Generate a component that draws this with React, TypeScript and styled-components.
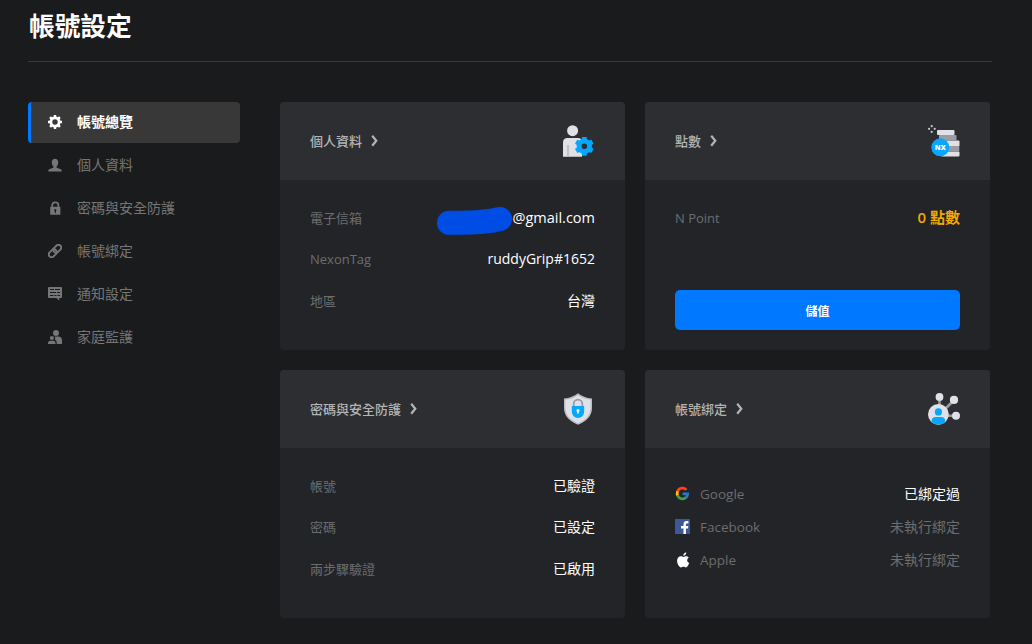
import React from "react";
import styled, { createGlobalStyle } from "styled-components";

const GlobalStyle = createGlobalStyle`
  * { box-sizing: border-box; }
  body {
    margin: 0;
    background: #1a1b1c;
    color: #fff;
    font-family: "Open Sans", "Noto Sans CJK TC", sans-serif;
    overflow: hidden;
  }
`;

const Page = styled.div`
  width: 1032px;
  height: 644px;
  padding: 0 40px 0 28px;
  overflow: hidden;
`;

const Header = styled.header`
  height: 62px;
  display: flex;
  align-items: flex-start;
  border-bottom: 1px solid #39393a;
`;

const Title = styled.h1`
  margin: 5px 0 0 1px;
  font-family: "Noto Sans CJK TC", sans-serif;
  font-size: 25.7px;
  line-height: 40px;
  font-weight: 700;
`;

const Columns = styled.div`
  display: flex;
  gap: 40px;
  padding-top: 40px;
`;

const Sidebar = styled.nav`
  width: 212px;
  display: flex;
  flex-direction: column;
  gap: 2px;
`;

const NavItem = styled.a<{ $active?: boolean }>`
  height: 41px;
  display: flex;
  align-items: center;
  gap: 15px;
  padding-left: 17px;
  border-left: 3px solid ${(p) => (p.$active ? "#0078ff" : "transparent")};
  border-radius: 4px;
  background: ${(p) => (p.$active ? "#383838" : "transparent")};
  color: ${(p) => (p.$active ? "#fff" : "#757676")};
  font-family: "Noto Sans CJK TC", sans-serif;
  font-size: 14px;
  line-height: 20px;
  font-weight: ${(p) => (p.$active ? 700 : 400)};
  svg { display: block; flex: none; margin-bottom: 1px; }
`;

const NavText = styled.span`
  padding-bottom: 4px;
`;

const Cards = styled.main`
  display: grid;
  grid-template-columns: 345px 345px;
  grid-auto-rows: 248px;
  gap: 20px;
`;

const Card = styled.section`
  background: #232428;
  border-radius: 4px;
  overflow: hidden;
`;

const CardHead = styled.div`
  height: 78px;
  padding: 0 30px;
  display: flex;
  align-items: center;
  justify-content: space-between;
  background: #2d2e32;
  > svg { display: block; }
`;

const CardTitle = styled.h2`
  margin: 0;
  display: flex;
  align-items: center;
  gap: 9px;
  color: #b3b4b5;
  font-family: "Noto Sans CJK TC", sans-serif;
  font-size: 13px;
  line-height: 18px;
  font-weight: 500;
`;

const CardBody = styled.div<{ $top?: number }>`
  padding: ${(p) => p.$top ?? 17}px 30px 0;
`;

const Row = styled.div<{ $height?: number }>`
  height: ${(p) => p.$height ?? 41.5}px;
  display: flex;
  align-items: center;
  justify-content: space-between;
`;

const Label = styled.span<{ $size?: number }>`
  color: #6c6d6f;
  font-size: ${(p) => p.$size ?? 13}px;
  line-height: 20px;
`;

const Value = styled.span<{ $muted?: boolean; $size?: number }>`
  display: flex;
  align-items: center;
  color: ${(p) => (p.$muted ? "#6c6d6f" : "#fff")};
  font-size: ${(p) => p.$size ?? 14}px;
  line-height: 20px;
`;

const Points = styled.span`
  padding-bottom: 1px;
  color: #f2a900;
  font-size: 15px;
  line-height: 20px;
  font-weight: 600;
`;

const Scribble = styled.svg`
  display: block;
  margin: 6px 0 0 0;
`;

const Provider = styled.span`
  display: flex;
  align-items: center;
  gap: 9px;
  svg { display: block; }
`;

const TopUpButton = styled.button`
  display: block;
  width: 100%;
  height: 40px;
  margin-top: 51.5px;
  padding: 0;
  border: 0;
  border-radius: 5px;
  background: #0078ff;
  color: #fff;
  font-family: "Noto Sans CJK TC", sans-serif;
  font-size: 12px;
  font-weight: 700;
`;

const gearPath = (cx: number, cy: number, outer: number, inner: number, teeth: number, width: number) => {
  const points: string[] = [];
  const step = (Math.PI * 2) / teeth;
  for (let i = 0; i < teeth; i++) {
    const a = i * step - Math.PI / 2;
    const corners: [number, number][] = [
      [inner, -width * 1.3],
      [outer, -width],
      [outer, width],
      [inner, width * 1.3],
    ];
    corners.forEach(([r, d]) =>
      points.push(`${(cx + r * Math.cos(a + d * step)).toFixed(2)} ${(cy + r * Math.sin(a + d * step)).toFixed(2)}`)
    );
  }
  return `M${points.join("L")}Z`;
};

const Chevron = () => (
  <svg width="8" height="12" viewBox="0 0 8 12" fill="none" stroke="#b3b4b5" strokeWidth="2.2">
    <path d="M1.200 .8 5.300 5.800 1.200 10.800" />
  </svg>
);

const NavGear = () => (
  <svg width="14" height="14" viewBox="0 0 14 14" fill="#fff">
    <path fillRule="evenodd" d={`${gearPath(7, 7, 7.1, 5.6, 8, 0.22)}M7 4.300a2.700 2.700 0 1 0 0 5.400 2.700 2.700 0 0 0 0-5.400Z`} />
  </svg>
);

const NavPerson = () => (
  <svg width="14" height="14" viewBox="0 0 14 14" fill="#757676">
    <path d="M7 .8C5 .8 3.800 2.200 3.800 4.300c0 1.800.6 3.300 1.600 4.200v1.300L1.800 10.900C.9 11.200.3 11.900.3 12.800v.8h13.400v-.8c0-.9-.6-1.600-1.500-1.900L8.600 9.800V8.500c1-.9 1.600-2.400 1.600-4.200C10.200 2.200 9 .8 7 .8Z" />
  </svg>
);

const NavLock = () => (
  <svg width="14" height="14" viewBox="0 0 14 14" fill="#757676">
    <path fillRule="evenodd" d="M3.300 5.800V4.600a4 4 0 0 1 8 0v1.200h.5q.6 0 .6.600v6.800q0 .600-.600.600H2.800q-.600 0-.600-.600V6.400q0-.600.600-.600ZM5 5.800h4.600V4.600a2.300 2.300 0 0 0-4.600 0ZM7.300 8.100a1.100 1.100 0 0 0-.6 2v1.900h1.200v-1.900a1.100 1.100 0 0 0-.6-2Z" />
  </svg>
);

const NavLink = () => (
  <svg width="14" height="14" viewBox="0 0 14 14" fill="none" stroke="#757676" strokeWidth="2">
    <g transform="rotate(-45 7 7)">
      <rect x="-.600" y="4.200" width="8.800" height="5.600" rx="2.800" />
      <rect x="5.800" y="4.200" width="8.800" height="5.600" rx="2.800" />
    </g>
  </svg>
);

const NavMessage = () => (
  <svg width="14" height="14" viewBox="0 0 14 14">
    <path fill="#757676" d="M1 0h12q1 0 1 1v9q0 1-1 1h-1.800v2.800L8.500 11H1q-1 0-1-1V1q0-1 1-1Z" />
    <path stroke="#1a1b1c" strokeWidth="1" d="M2 2.500h4M7 2.500h5M2 5.500h6M9 5.500h3M2 8.500h3.500M6.500 8.500h2M9.500 8.500H12" />
  </svg>
);

const NavFamily = () => (
  <svg width="14" height="14" viewBox="0 0 14 14" fill="#757676">
    <circle cx="8" cy="3" r="3" />
    <circle cx="3.900" cy="8" r="2.100" />
    <path d="M0 14v-1q0-2.300 2.300-2.300h2.900q2.300 0 2.300 2.300v1ZM6.500 6.500h3.800Q14 6.500 14 10.300V14H8.700v-1.600q0-1.900-1.800-2.700 1-1.700-.4-3.200Z" />
  </svg>
);

const ProfileIcon = () => (
  <svg width="32" height="32" viewBox="0 0 32 32">
    <circle cx="9.600" cy="5.700" r="5.500" fill="#e0e1e6" />
    <path fill="#e0e1e6" d="M0 31.700V17.500Q0 13 4.500 13H15q4 0 4 4.500v14.200Z" />
    <path stroke="#b8b9be" strokeWidth="1.600" d="M5 20v11.700" />
    <path fill="#06a7ff" stroke="#06a7ff" strokeWidth="1.200" strokeLinejoin="round" fillRule="evenodd" d={gearPath(21.3, 21.3, 9, 7.2, 6, 0.2)} />
    <circle cx="21.300" cy="21.300" r="2.800" fill="#2d2e32" />
  </svg>
);

const NxText = styled.text`
  font-family: "Open Sans", sans-serif;
  font-size: 7px;
  font-weight: 800;
  fill: #fff;
`;

const CoinsIcon = () => (
  <svg width="32" height="32" viewBox="0 0 32 32">
    <g fill="#e0e1e6">
      <rect x="9" y="5" width="17.500" height="5" rx="1" />
      <rect x="15" y="15.500" width="16.500" height="6" rx="1" />
      <rect x="13" y="26.500" width="18.500" height="5" rx="1" />
    </g>
    <g fill="#9c9da3">
      <rect x="11" y="10" width="17.500" height="5.500" rx=".7" />
      <rect x="17" y="21" width="14.300" height="5.500" rx=".7" />
    </g>
    <g fill="#c8c9ce">
      <circle cx="3.700" cy="1.200" r="1.100" />
      <circle cx="1.100" cy="3.800" r="1.100" />
      <circle cx="6.700" cy="3.800" r="1.100" />
      <circle cx="3.700" cy="6.900" r="1.100" />
    </g>
    <circle cx="12.300" cy="22.300" r="9" fill="#06a7ff" />
    <NxText x="12.300" y="24.800" textAnchor="middle">NX</NxText>
  </svg>
);

const ShieldIcon = () => (
  <svg width="34" height="32" viewBox="0 0 34 32">
    <path fill="#bcbdc2" d="M17 .3q5.500 4.600 14 5.200V15q0 11-14 16.800Q3 26 3 15V5.500Q11.500 4.900 17 .3Z" />
    <path fill="#e0e1e6" d="M17 2.200q5.200 4 12.600 4.600V15q0 10-12.600 15.200Q4.400 25 4.400 15V6.800q7.400-.6 12.600-4.600Z" />
    <path fill="none" stroke="#999a9f" strokeWidth="1.800" d="M12.700 14v-3.100a4.300 4.300 0 0 1 8.600 0V14" />
    <path fill="#06a7ff" d="M11.500 13h11q.7 0 .7.700v5.100a6.200 6.200 0 0 1-12.400 0v-5.100q0-.7.700-.7Z" />
    <circle cx="17" cy="17.400" r="1.500" fill="#fff" />
    <path fill="#fff" d="M16.300 17h1.400v3.700h-1.400Z" />
  </svg>
);

const LinkedIcon = () => (
  <svg width="32" height="32" viewBox="0 0 32 32">
    <path fill="none" stroke="#999a9f" strokeWidth="2.600" d="M11.500 4v16M26.200 7 12 21M10 22.800h18" />
    <g fill="#e0e1e6">
      <circle cx="11.500" cy="3.900" r="3.900" />
      <circle cx="26" cy="6.900" r="4.100" />
      <circle cx="28" cy="22.800" r="4" />
      <circle cx="10.400" cy="21.300" r="10.400" />
    </g>
    <g fill="#06a7ff">
      <circle cx="10.400" cy="18.900" r="3.600" />
      <path d="M3.500 29v-.7q0-4.300 4.400-4.300h5q4.400 0 4.400 4.300v.7a10.400 10.400 0 0 1-13.800 0Z" />
    </g>
  </svg>
);

const GoogleIcon = () => (
  <svg width="16" height="16" viewBox="0 0 16 16" fill="none" strokeWidth="2.700">
    <path stroke="#ff4019" d="M2.600 5.400A5.200 5.200 0 0 1 11.400 3.900" />
    <path stroke="#ffc107" d="M2.700 9.700a5.200 5.200 0 0 1-.1-4.400" />
    <path stroke="#43a047" d="M11 11.500A5.200 5.200 0 0 1 2.600 9.500" />
    <path stroke="#2878c8" d="M7.600 7.900h5.100q-.1 2.300-1.800 3.700" />
  </svg>
);

const FacebookIcon = () => (
  <svg width="16" height="16" viewBox="0 0 16 16">
    <rect x="0" y="0" width="15" height="15" rx=".5" fill="#3b5998" />
    <path fill="#fff" d="M8.500 15V9.500H6V7.100h2.500V5.400c0-2.200 1.300-3.300 3.200-3.300h1.700v2.300h-1.300c-1 0-1.200.5-1.200 1.300v1.400h2.400L13 9.500h-2.100V15Z" />
  </svg>
);

const AppleIcon = () => (
  <svg width="16" height="16" viewBox="0 0 16 16" fill="#fff">
    <path d="M11.300.2c.1 1.900-1.300 3.500-3 3.500C8.100 2 9.600.4 11.300.2ZM13.700 5.700c-2.200 1.400-1.800 4.300.5 5.300-.5 1.500-1.900 4.400-3.400 4.400-1 0-1.300-.6-2.400-.6s-1.500.6-2.400.6C4.200 15.400 2.100 12 2.100 8.800c0-2.900 1.700-4.600 3.700-4.600 1.200 0 2 .7 2.700.7s1.700-.8 3-.7c.9 0 1.700.5 2.200 1.500Z" />
  </svg>
);

const navItems = [
  { label: "帳號總覽", icon: <NavGear />, active: true },
  { label: "個人資料", icon: <NavPerson /> },
  { label: "密碼與安全防護", icon: <NavLock /> },
  { label: "帳號綁定", icon: <NavLink /> },
  { label: "通知設定", icon: <NavMessage /> },
  { label: "家庭監護", icon: <NavFamily /> },
];

const securityRows = [
  ["帳號", "已驗證"],
  ["密碼", "已設定"],
  ["兩步驟驗證", "已啟用"],
];

const providers = [
  { name: "Google", icon: <GoogleIcon />, status: "已綁定過", linked: true },
  { name: "Facebook", icon: <FacebookIcon />, status: "未執行綁定" },
  { name: "Apple", icon: <AppleIcon />, status: "未執行綁定" },
];

const Head = ({ title, icon }: { title: string; icon: React.ReactNode }) => (
  <CardHead>
    <CardTitle>
      {title}
      <Chevron />
    </CardTitle>
    {icon}
  </CardHead>
);

export default function App() {
  return (
    <Page>
      <GlobalStyle />
      <Header>
        <Title>帳號設定</Title>
      </Header>
      <Columns>
        <Sidebar>
          {navItems.map((item) => (
            <NavItem key={item.label} $active={item.active}>
              {item.icon}
              <NavText>{item.label}</NavText>
            </NavItem>
          ))}
        </Sidebar>
        <Cards>
          <Card>
            <Head title="個人資料" icon={<ProfileIcon />} />
            <CardBody>
              <Row>
                <Label>電子信箱</Label>
                <Value $size={14.5}>
                  <Scribble width="75" height="28" viewBox="0 0 75 28">
                    <path d="M12 15.800C30 15.500 45 16.500 63 12" fill="none" stroke="#004de6" strokeWidth="24" strokeLinecap="round" />
                  </Scribble>
                  @gmail.com
                </Value>
              </Row>
              <Row>
                <Label>NexonTag</Label>
                <Value>ruddyGrip#1652</Value>
              </Row>
              <Row>
                <Label>地區</Label>
                <Value>台灣</Value>
              </Row>
            </CardBody>
          </Card>
          <Card>
            <Head title="點數" icon={<CoinsIcon />} />
            <CardBody>
              <Row>
                <Label>N Point</Label>
                <Points>0 點數</Points>
              </Row>
              <TopUpButton>儲值</TopUpButton>
            </CardBody>
          </Card>
          <Card>
            <Head title="密碼與安全防護" icon={<ShieldIcon />} />
            <CardBody>
              {securityRows.map(([label, value]) => (
                <Row key={label}>
                  <Label>{label}</Label>
                  <Value>{value}</Value>
                </Row>
              ))}
            </CardBody>
          </Card>
          <Card>
            <Head title="帳號綁定" icon={<LinkedIcon />} />
            <CardBody $top={29}>
              {providers.map((p) => (
                <Row key={p.name} $height={33}>
                  <Provider>
                    {p.icon}
                    <Label $size={13.5}>{p.name}</Label>
                  </Provider>
                  <Value $muted={!p.linked}>{p.status}</Value>
                </Row>
              ))}
            </CardBody>
          </Card>
        </Cards>
      </Columns>
    </Page>
  );
}
